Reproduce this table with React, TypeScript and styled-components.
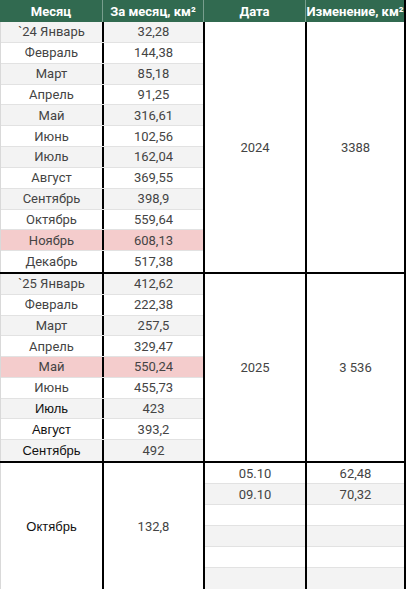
import React from "react";
import styled, { createGlobalStyle } from "styled-components";

type Tone = "gray" | "white" | "pink";

interface MonthRow {
  month: string;
  value: string;
  tone: Tone;
  plain?: boolean;
}

const rows2024: MonthRow[] = [
  { month: "`24 Январь", value: "32,28", tone: "gray" },
  { month: "Февраль", value: "144,38", tone: "white" },
  { month: "Март", value: "85,18", tone: "gray" },
  { month: "Апрель", value: "91,25", tone: "white" },
  { month: "Май", value: "316,61", tone: "gray" },
  { month: "Июнь", value: "102,56", tone: "white" },
  { month: "Июль", value: "162,04", tone: "gray" },
  { month: "Август", value: "369,55", tone: "white" },
  { month: "Сентябрь", value: "398,9", tone: "gray" },
  { month: "Октябрь", value: "559,64", tone: "white" },
  { month: "Ноябрь", value: "608,13", tone: "pink" },
  { month: "Декабрь", value: "517,38", tone: "white" },
];

const rows2025: MonthRow[] = [
  { month: "`25 Январь", value: "412,62", tone: "gray" },
  { month: "Февраль", value: "222,38", tone: "white" },
  { month: "Март", value: "257,5", tone: "gray" },
  { month: "Апрель", value: "329,47", tone: "white" },
  { month: "Май", value: "550,24", tone: "pink" },
  { month: "Июнь", value: "455,73", tone: "white" },
  { month: "Июль", value: "423", tone: "gray", plain: true },
  { month: "Август", value: "393,2", tone: "white", plain: true },
  { month: "Сентябрь", value: "492", tone: "gray", plain: true },
];

const octoberDays = [
  { date: "05.10", value: "62,48" },
  { date: "09.10", value: "70,32" },
  { date: "", value: "" },
  { date: "", value: "" },
  { date: "", value: "" },
  { date: "", value: "" },
];

const toneColor: Record<Tone, string> = {
  gray: "#f3f3f3",
  white: "#ffffff",
  pink: "#f4cccc",
};

const GlobalStyle = createGlobalStyle`
  body {
    margin: 0;
    background: #ffffff;
    font-family: Roboto, "Liberation Sans", sans-serif;
  }
`;

const Sheet = styled.div`
  width: 406px;
  height: 589px;
  overflow: hidden;
  border-right: 2px solid #000;
  box-sizing: border-box;
  font-size: 13px;
  color: #444;
`;

const HeaderRow = styled.div`
  display: grid;
  grid-template-columns: 102px 101px 102px 99px;
  height: 22px;
  background: #316a50;
`;

const HeaderCell = styled.div`
  display: flex;
  align-items: center;
  justify-content: center;
  color: #ffffff;
  font-weight: 700;
  white-space: nowrap;
  overflow: hidden;
  & + & {
    border-left: 1px solid rgba(255, 255, 255, 0.35);
  }
`;

const Block = styled.div<{ $rows: number }>`
  display: grid;
  grid-template-columns: 203px 102px 99px;
  height: ${(p) => p.$rows * 21}px;
  border-bottom: 2px solid #000;
  box-sizing: border-box;
`;

const RowList = styled.div`
  display: grid;
  grid-auto-rows: 1fr;
  border-left: 1px solid #d9d9d9;
`;

const DataRow = styled.div<{ $tone: Tone }>`
  display: grid;
  grid-template-columns: 101px 101px;
  background: ${(p) => toneColor[p.$tone]};
  border-bottom: 1px solid #e2e2e2;
  &:last-child {
    border-bottom: none;
  }
`;

const Cell = styled.div<{ $plain?: boolean }>`
  display: flex;
  align-items: center;
  justify-content: center;
  white-space: nowrap;
  font-family: ${(p) => (p.$plain ? '"Liberation Sans", Arial, sans-serif' : 'Roboto, sans-serif')};
  color: ${(p) => (p.$plain ? "#111" : "#444")};
  & + & {
    border-left: 2px solid #000;
  }
`;

const Merged = styled.div`
  display: flex;
  align-items: center;
  justify-content: center;
  background: #ffffff;
  border-left: 2px solid #000;
`;

const OctoberBlock = styled.div`
  display: grid;
  grid-template-columns: 102px 101px 102px 99px;
  height: 126px;
`;

const OctoberMonth = styled(Cell)`
  border-left: 1px solid #d9d9d9;
  & + & {
    border-left: 2px solid #000;
  }
`;

const SubList = styled.div`
  display: grid;
  grid-template-rows: repeat(6, 1fr);
  border-left: 2px solid #000;
`;

const SubRow = styled.div<{ $odd: boolean }>`
  display: flex;
  align-items: center;
  justify-content: center;
  background: ${(p) => (p.$odd ? "#f3f3f3" : "#ffffff")};
  border-bottom: 1px solid #e2e2e2;
  &:last-child {
    border-bottom: none;
  }
`;

function YearBlock({ rows, year, total }: { rows: MonthRow[]; year: string; total: string }) {
  return (
    <Block $rows={rows.length}>
      <RowList>
        {rows.map((r, i) => (
          <DataRow key={i} $tone={r.tone}>
            <Cell $plain={r.plain}>{r.month}</Cell>
            <Cell>{r.value}</Cell>
          </DataRow>
        ))}
      </RowList>
      <Merged>{year}</Merged>
      <Merged>{total}</Merged>
    </Block>
  );
}

export default function App() {
  return (
    <>
      <GlobalStyle />
      <Sheet>
        <HeaderRow>
          <HeaderCell>Месяц</HeaderCell>
          <HeaderCell>За месяц, км²</HeaderCell>
          <HeaderCell>Дата</HeaderCell>
          <HeaderCell>Изменение, км²</HeaderCell>
        </HeaderRow>
        <YearBlock rows={rows2024} year="2024" total="3388" />
        <YearBlock rows={rows2025} year="2025" total="3 536" />
        <OctoberBlock>
          <OctoberMonth $plain>Октябрь</OctoberMonth>
          <OctoberMonth>132,8</OctoberMonth>
          <SubList>
            {octoberDays.map((d, i) => (
              <SubRow key={i} $odd={i % 2 === 1}>
                {d.date}
              </SubRow>
            ))}
          </SubList>
          <SubList>
            {octoberDays.map((d, i) => (
              <SubRow key={i} $odd={i % 2 === 1}>
                {d.value}
              </SubRow>
            ))}
          </SubList>
        </OctoberBlock>
      </Sheet>
    </>
  );
}
